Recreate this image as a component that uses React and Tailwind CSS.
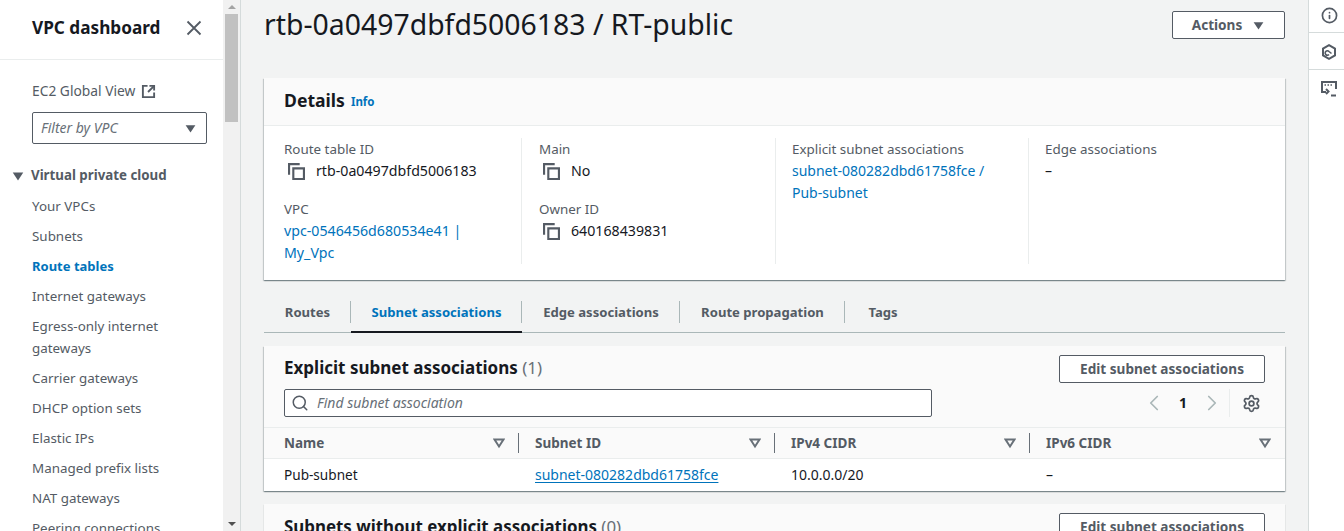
import React from "react";
import { Search, ChevronLeft, ChevronRight, Settings, Info } from "lucide-react";

const navItems = [
  { label: "Your VPCs" },
  { label: "Subnets" },
  { label: "Route tables", active: true },
  { label: "Internet gateways" },
  { label: "Egress-only internet gateways", wrap: true },
  { label: "Carrier gateways" },
  { label: "DHCP option sets" },
  { label: "Elastic IPs" },
  { label: "Managed prefix lists" },
  { label: "NAT gateways" },
  { label: "Peering connections" },
];

const tabs = [
  { label: "Routes", w: "w-[87px]" },
  { label: "Subnet associations", w: "w-[171px]", active: true },
  { label: "Edge associations", w: "w-[158px]" },
  { label: "Route propagation", w: "w-[165px]" },
  { label: "Tags", w: "w-[76px]" },
];

const columns = [
  { label: "Name", w: "w-[255px]", pad: "pl-[20px]" },
  { label: "Subnet ID", w: "w-[256px]", pad: "pl-[16px]" },
  { label: "IPv4 CIDR", w: "w-[255px]", pad: "pl-[16px]" },
  { label: "IPv6 CIDR", w: "flex-1", pad: "pl-[16px]", last: true },
];

const cardShadow =
  "shadow-[0_1px_1px_0_rgba(0,28,36,0.3),1px_1px_1px_0_rgba(0,28,36,0.15),-1px_1px_1px_0_rgba(0,28,36,0.15)]";

const Caret = ({ className = "" }) => (
  <svg viewBox="0 0 16 16" className={className} fill="currentColor">
    <path d="M2 4h12l-6 9z" />
  </svg>
);

const SortIcon = () => (
  <svg viewBox="0 0 12 12" className="w-3 h-3 text-[#687078]" fill="none" stroke="currentColor" strokeWidth="2">
    <path d="M1.5 2.5h9L6 9.5z" />
  </svg>
);

const CopyIcon = () => (
  <svg viewBox="0 0 16 16" className="w-[17px] h-[17px] text-[#545b64] shrink-0" fill="none" stroke="currentColor" strokeWidth="2">
    <path d="M5 5h10v10H5z" />
    <path d="M11 1H1v10" />
  </svg>
);

const CopyValue = ({ children }) => (
  <div className="flex items-center h-[22px] text-[14.2px] text-[#16191f]">
    <span className="w-[32px] pl-[4px]">
      <CopyIcon />
    </span>
    {children}
  </div>
);

const Label = ({ children }) => (
  <div className="h-[22px] leading-[22px] text-[13.4px] text-[#545b64]">{children}</div>
);

const Link = ({ children }) => <span className="text-[#0073bb]">{children}</span>;

const OutlineButton = ({ children, className = "" }) => (
  <button className={`border border-[#545b64] rounded-[2px] bg-white font-bold text-[#545b64] text-[13.6px] ${className}`}>
    {children}
  </button>
);

const Sidebar = () => (
  <aside className="w-[223px] shrink-0 bg-white h-full overflow-hidden">
    <div className="h-[60px] border-b border-[#eaeded] flex items-center justify-between pl-[32px] pr-[21px] pb-[3px]">
      <span className="text-[17.2px] font-bold text-[#16191f]">VPC dashboard</span>
      <svg viewBox="0 0 16 16" className="w-4 h-4 text-[#545b64]" fill="none" stroke="currentColor" strokeWidth="1.8">
        <path d="M1.500 1.500l13 13M14.500 1.500l-13 13" />
      </svg>
    </div>
    <div className="pl-[32px] pr-[16px] pt-[19px]">
      <div className="flex items-center gap-[6px] h-[24px] text-[13.8px] text-[#545b64]">
        EC2 Global View
        <svg viewBox="0 0 16 16" className="w-[15px] h-[15px]" fill="none" stroke="currentColor" strokeWidth="2">
          <path d="M7 2H2v12h12V9" />
          <path d="M9 2h5v5" />
          <path d="M14 2L7.500 8.500" />
        </svg>
      </div>
      <div className="mt-[9px] h-[32px] border border-[#545b64] rounded-[2px] flex items-center justify-between pl-[8px] pr-[9px] text-sm italic text-[#687078]">
        Filter by VPC
        <Caret className="w-[13px] h-[13px] text-[#545b64]" />
      </div>
    </div>
    <div className="mt-[20px] pl-[11px] flex items-center gap-[6px] h-[24px] text-[13.3px] font-bold text-[#545b64]">
      <Caret className="w-[14px] h-[14px]" />
      Virtual private cloud
    </div>
    <ul className="mt-[7px] pl-[32px] pr-[16px] text-[13.4px] leading-[22px]">
      {navItems.map((item) => (
        <li
          key={item.label}
          className={`mb-[8px] ${item.active ? "font-bold text-[13px] text-[#0073bb]" : "text-[#545b64]"}`}
        >
          {item.label}
        </li>
      ))}
    </ul>
  </aside>
);

const Scrollbar = () => (
  <div className="w-[17px] shrink-0 h-full bg-[#f1f1f1] flex flex-col items-center">
    <svg viewBox="0 0 8 4" className="w-[8px] h-[4px] mt-[5px] text-[#a3a3a3]" fill="currentColor">
      <path d="M4 0l4 4H0z" />
    </svg>
    <div className="w-[13px] h-[108px] mt-[5px] bg-[#c1c1c1]" />
    <div className="flex-1" />
    <svg viewBox="0 0 8 4" className="w-[8px] h-[4px] mb-[5px] text-[#505050]" fill="currentColor">
      <path d="M4 4l4-4H0z" />
    </svg>
  </div>
);

const Details = () => (
  <section className={`mt-[29px] bg-white ${cardShadow}`}>
    <div className="h-[48px] bg-[#fafafa] border-b border-[#eaeded] flex items-center pl-[20px] gap-[6px] pb-[2px]">
      <h2 className="text-[17.6px] font-bold text-[#16191f]">Details</h2>
      <span className="text-[11.5px] font-bold text-[#0073bb] pt-[2px]">Info</span>
    </div>
    <div className="h-[154px] pt-[12px] grid grid-cols-[258px_254px_253px_1fr] text-sm">
      <div className="pl-[20px] h-[126px] border-r border-[#eaeded]">
        <Label>Route table ID</Label>
        <CopyValue>rtb-0a0497dbfd5006183</CopyValue>
        <div className="mt-[16px]">
          <Label>VPC</Label>
          <div className="leading-[22px] w-[180px] text-[14.2px]">
            <Link>vpc-0546456d680534e41 | My_Vpc</Link>
          </div>
        </div>
      </div>
      <div className="pl-[17px] h-[126px] border-r border-[#eaeded]">
        <Label>Main</Label>
        <CopyValue>No</CopyValue>
        <div className="mt-[16px]">
          <Label>Owner ID</Label>
          <CopyValue>640168439831</CopyValue>
        </div>
      </div>
      <div className="pl-[16px] h-[126px] border-r border-[#eaeded]">
        <Label>Explicit subnet associations</Label>
        <div className="leading-[22px] w-[200px]">
          <Link>subnet-080282dbd61758fce / Pub-subnet</Link>
        </div>
      </div>
      <div className="pl-[16px]">
        <Label>Edge associations</Label>
        <div className="leading-[22px] text-[#16191f]">–</div>
      </div>
    </div>
  </section>
);

const Tabs = () => (
  <div className="mt-[17px] h-[36px] flex border-b border-[#aab7b8]">
    {tabs.map((tab, i) => (
      <div
        key={tab.label}
        className={`${tab.w} h-[36px] relative flex items-center justify-center text-[13.1px] font-bold ${
          tab.active ? "pb-[2px] text-[#0073bb] border-b-[2px] border-[#16191f]" : "pb-[4px] text-[#545b64]"
        }`}
      >
        {tab.label}
        {i < tabs.length - 1 && <span className="absolute right-0 top-[4px] h-[22px] w-px bg-[#aab7b8]" />}
      </div>
    ))}
  </div>
);

const Associations = () => (
  <section className={`mt-[13px] bg-white ${cardShadow}`}>
    <div className="h-[82px] bg-[#fafafa] border-b border-[#eaeded] pl-[20px] pr-[20px] pt-[9px]">
      <div className="flex items-center justify-between h-[27px]">
        <h2 className="text-[17px] font-bold text-[#16191f] pb-[2px]">
          Explicit subnet associations <span className="font-normal text-[#687078]">(1)</span>
        </h2>
        <OutlineButton className="w-[206px] h-[28px] pt-[1px]">Edit subnet associations</OutlineButton>
      </div>
      <div className="flex items-center justify-between mt-[7px]">
        <div className="w-[648px] h-[28px] bg-white border border-[#545b64] rounded-[2px] flex items-center pl-[6px] gap-[8px] text-sm italic text-[#687078]">
          <Search className="w-[18px] h-[18px] text-[#545b64]" strokeWidth={2} />
          Find subnet association
        </div>
        <div className="flex items-center h-[28px] text-[#aab7b8]">
          <ChevronLeft className="w-[26px] h-[26px]" strokeWidth={1.6} />
          <span className="w-[32px] text-center text-sm font-bold text-[#16191f]">1</span>
          <ChevronRight className="w-[26px] h-[26px]" strokeWidth={1.6} />
          <span className="w-px h-[28px] bg-[#eaeded] ml-[4px] mr-[12px]" />
          <Settings className="w-[19px] h-[19px] text-[#545b64] mr-[4px]" strokeWidth={2.2} />
        </div>
      </div>
    </div>
    <div className="flex h-[31px] bg-[#fafafa] border-b border-[#eaeded] text-[13.5px] font-bold text-[#545b64]">
      {columns.map((col) => (
        <div key={col.label} className={`${col.w} ${col.pad} relative flex items-center justify-between pr-[14px]`}>
          {col.label}
          <SortIcon />
          {!col.last && <span className="absolute right-0 top-[5px] h-[20px] w-px bg-[#687078]" />}
        </div>
      ))}
    </div>
    <div className="flex h-[32px] items-center text-sm text-[#16191f]">
      <div className="w-[255px] pl-[20px] text-[13.6px]">Pub-subnet</div>
      <div className="w-[256px] pl-[16px]">
        <span className="text-[#0073bb] underline underline-offset-2">subnet-080282dbd61758fce</span>
      </div>
      <div className="w-[255px] pl-[16px]">10.0.0.0/20</div>
      <div className="flex-1 pl-[16px]">–</div>
    </div>
  </section>
);

const Unassociated = () => (
  <section className="mt-[13px] bg-[#fafafa] h-[83px] pl-[20px] pr-[20px] pt-[9px] shadow-[0_1px_1px_0_rgba(0,28,36,0.3)]">
    <div className="flex items-center justify-between h-[27px]">
      <h2 className="text-[16.9px] font-bold text-[#16191f]">
        Subnets without explicit associations <span className="font-normal text-[#687078]">(0)</span>
      </h2>
      <OutlineButton className="w-[206px] h-[28px] pt-[1px]">Edit subnet associations</OutlineButton>
    </div>
  </section>
);

const Rail = () => (
  <aside className="w-[36px] shrink-0 h-full bg-white border-l border-[#d5dbdb]">
    <div className="h-[33px] border-b border-[#d5dbdb] pl-[12px] pt-[7px]">
      <Info className="w-[17px] h-[17px] text-[#545b64]" strokeWidth={2.4} />
    </div>
    <div className="h-[37px] border-b border-[#d5dbdb] pl-[12px] pt-[11px]">
      <svg viewBox="0 0 16 16" className="w-[16px] h-[16px] text-[#545b64]" fill="none" stroke="currentColor" strokeWidth="2">
        <path d="M8 1.200l6 3.400v6.800l-6 3.400-6-3.400V4.600z" />
        <path d="M10.500 9.500L8 7.500a2.200 2.200 0 1 0 0 3" strokeWidth="1.600" />
      </svg>
    </div>
    <div className="pl-[12px] pt-[11px]">
      <svg viewBox="0 0 16 16" className="w-[16px] h-[16px] text-[#545b64]" fill="none" stroke="currentColor" strokeWidth="2">
        <path d="M5 11H1V1h14v7" />
        <path d="M3.500 4h1.500M6.500 4H8M9.500 4H11" strokeWidth="1.600" />
        <path d="M5 8l2.500 2.500L5 13" />
        <path d="M10 14.500h5" />
      </svg>
    </div>
  </aside>
);

export default function App() {
  return (
    <div className="flex w-[1344px] h-[531px] overflow-hidden bg-[#f2f3f3] font-['Noto_Sans',sans-serif]">
      <Sidebar />
      <Scrollbar />
      <div className="w-px h-full bg-[#d5dbdb] shrink-0" />
      <main className="flex-1 h-full overflow-hidden pl-[23px] pr-[23px]">
        <div className="flex items-start justify-between h-[49px]">
          <h1 className="text-[28.4px] leading-[49px] text-[#16191f]">rtb-0a0497dbfd5006183 / RT-public</h1>
          <OutlineButton className="mt-[11px] w-[113px] h-[28px] flex items-center justify-center gap-[10px]">
            Actions
            <Caret className="w-[13px] h-[13px]" />
          </OutlineButton>
        </div>
        <Details />
        <Tabs />
        <Associations />
        <Unassociated />
      </main>
      <Rail />
    </div>
  );
}
